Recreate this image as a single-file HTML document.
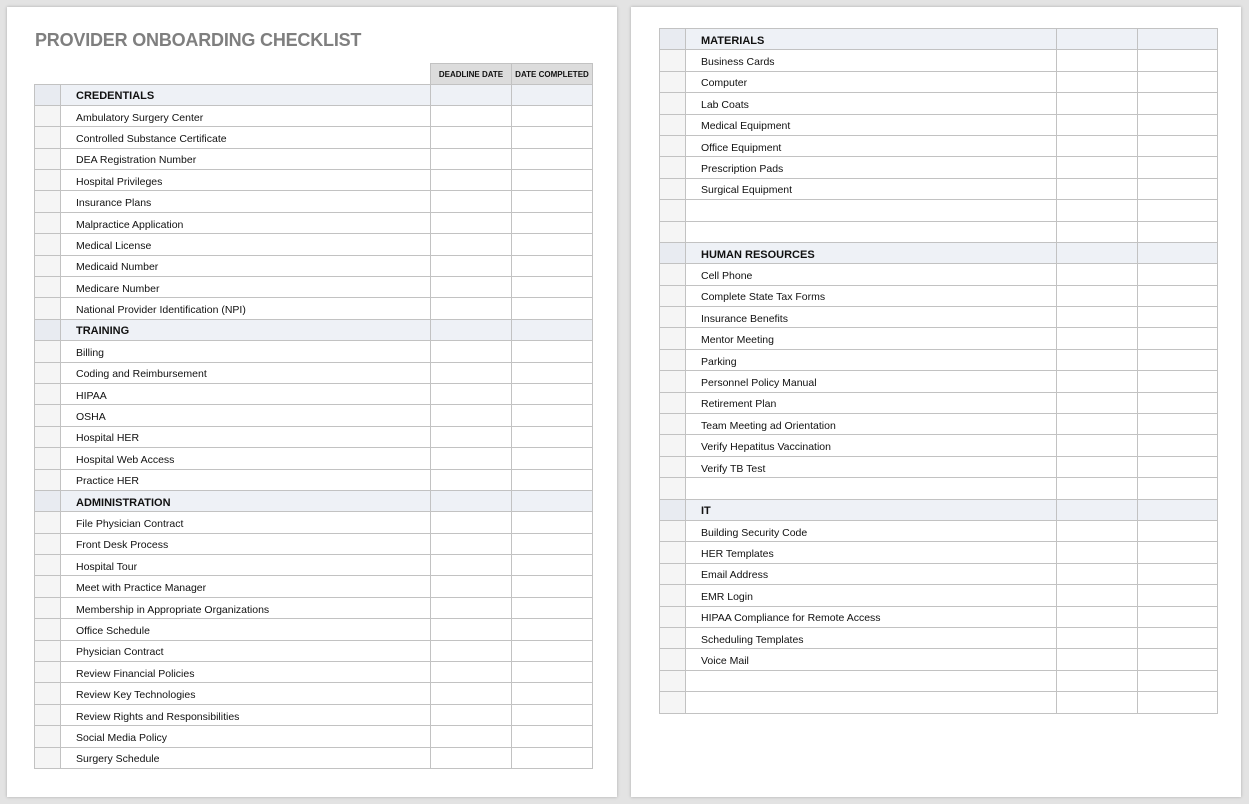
<!DOCTYPE html>
<html><head><meta charset="utf-8"><style>
body{margin:0;width:1249px;height:804px;background:#e3e3e3;position:relative;overflow:hidden;font-family:"Liberation Sans",sans-serif}
.page{position:absolute;background:#fff;box-shadow:0 0 3px rgba(0,0,0,.25)}
h1{position:absolute;left:35px;top:30px;margin:0;font-size:18px;color:#7f7f7f;font-weight:bold;letter-spacing:-0.2px}
table{position:absolute;border-collapse:collapse;table-layout:fixed;font-size:10.5px;color:#111}
td{border:1px solid #c2c2c2;height:21.4px;padding:3px 0 0 15px;white-space:nowrap;overflow:hidden;box-sizing:border-box}
td.a{background:#f5f5f5;padding:0}
td.e{padding:0}
tr.s td{background:#eef1f6;font-weight:bold;font-size:11px}
tr.s td.a{background:#e8ebf1}
tr.h td{background:#dcdcdc;font-weight:bold;font-size:8px;text-align:center;padding:2px 0 0 0;height:20.5px}
tr.h td.n{background:#fff;border:none}
</style></head><body>
<div class="page" style="left:7px;top:7px;width:610px;height:790px"></div>
<div class="page" style="left:631px;top:7px;width:610px;height:790px"></div>
<h1>PROVIDER ONBOARDING CHECKLIST</h1>
<table style="left:34px;top:63px;width:558px">
<colgroup><col style="width:26px"><col style="width:370px"><col style="width:81px"><col style="width:81px"></colgroup>
<tr class="h"><td class="n"></td><td class="n"></td><td>DEADLINE DATE</td><td>DATE COMPLETED</td></tr>
<tr class="s"><td class="a"></td><td>CREDENTIALS</td><td class="e"></td><td class="e"></td></tr>
<tr><td class="a"></td><td>Ambulatory Surgery Center</td><td class="e"></td><td class="e"></td></tr>
<tr><td class="a"></td><td>Controlled Substance Certificate</td><td class="e"></td><td class="e"></td></tr>
<tr><td class="a"></td><td>DEA Registration Number</td><td class="e"></td><td class="e"></td></tr>
<tr><td class="a"></td><td>Hospital Privileges</td><td class="e"></td><td class="e"></td></tr>
<tr><td class="a"></td><td>Insurance Plans</td><td class="e"></td><td class="e"></td></tr>
<tr><td class="a"></td><td>Malpractice Application</td><td class="e"></td><td class="e"></td></tr>
<tr><td class="a"></td><td>Medical License</td><td class="e"></td><td class="e"></td></tr>
<tr><td class="a"></td><td>Medicaid Number</td><td class="e"></td><td class="e"></td></tr>
<tr><td class="a"></td><td>Medicare Number</td><td class="e"></td><td class="e"></td></tr>
<tr><td class="a"></td><td>National Provider Identification (NPI)</td><td class="e"></td><td class="e"></td></tr>
<tr class="s"><td class="a"></td><td>TRAINING</td><td class="e"></td><td class="e"></td></tr>
<tr><td class="a"></td><td>Billing</td><td class="e"></td><td class="e"></td></tr>
<tr><td class="a"></td><td>Coding and Reimbursement</td><td class="e"></td><td class="e"></td></tr>
<tr><td class="a"></td><td>HIPAA</td><td class="e"></td><td class="e"></td></tr>
<tr><td class="a"></td><td>OSHA</td><td class="e"></td><td class="e"></td></tr>
<tr><td class="a"></td><td>Hospital HER</td><td class="e"></td><td class="e"></td></tr>
<tr><td class="a"></td><td>Hospital Web Access</td><td class="e"></td><td class="e"></td></tr>
<tr><td class="a"></td><td>Practice HER</td><td class="e"></td><td class="e"></td></tr>
<tr class="s"><td class="a"></td><td>ADMINISTRATION</td><td class="e"></td><td class="e"></td></tr>
<tr><td class="a"></td><td>File Physician Contract</td><td class="e"></td><td class="e"></td></tr>
<tr><td class="a"></td><td>Front Desk Process</td><td class="e"></td><td class="e"></td></tr>
<tr><td class="a"></td><td>Hospital Tour</td><td class="e"></td><td class="e"></td></tr>
<tr><td class="a"></td><td>Meet with Practice Manager</td><td class="e"></td><td class="e"></td></tr>
<tr><td class="a"></td><td>Membership in Appropriate Organizations</td><td class="e"></td><td class="e"></td></tr>
<tr><td class="a"></td><td>Office Schedule</td><td class="e"></td><td class="e"></td></tr>
<tr><td class="a"></td><td>Physician Contract</td><td class="e"></td><td class="e"></td></tr>
<tr><td class="a"></td><td>Review Financial Policies</td><td class="e"></td><td class="e"></td></tr>
<tr><td class="a"></td><td>Review Key Technologies</td><td class="e"></td><td class="e"></td></tr>
<tr><td class="a"></td><td>Review Rights and Responsibilities</td><td class="e"></td><td class="e"></td></tr>
<tr><td class="a"></td><td>Social Media Policy</td><td class="e"></td><td class="e"></td></tr>
<tr><td class="a"></td><td>Surgery Schedule</td><td class="e"></td><td class="e"></td></tr>
</table>
<table style="left:659px;top:28px;width:558px">
<colgroup><col style="width:26px"><col style="width:371px"><col style="width:81px"><col style="width:80px"></colgroup>
<tr class="s"><td class="a"></td><td>MATERIALS</td><td class="e"></td><td class="e"></td></tr>
<tr><td class="a"></td><td>Business Cards</td><td class="e"></td><td class="e"></td></tr>
<tr><td class="a"></td><td>Computer</td><td class="e"></td><td class="e"></td></tr>
<tr><td class="a"></td><td>Lab Coats</td><td class="e"></td><td class="e"></td></tr>
<tr><td class="a"></td><td>Medical Equipment</td><td class="e"></td><td class="e"></td></tr>
<tr><td class="a"></td><td>Office Equipment</td><td class="e"></td><td class="e"></td></tr>
<tr><td class="a"></td><td>Prescription Pads</td><td class="e"></td><td class="e"></td></tr>
<tr><td class="a"></td><td>Surgical Equipment</td><td class="e"></td><td class="e"></td></tr>
<tr><td class="a"></td><td></td><td class="e"></td><td class="e"></td></tr>
<tr><td class="a"></td><td></td><td class="e"></td><td class="e"></td></tr>
<tr class="s"><td class="a"></td><td>HUMAN RESOURCES</td><td class="e"></td><td class="e"></td></tr>
<tr><td class="a"></td><td>Cell Phone</td><td class="e"></td><td class="e"></td></tr>
<tr><td class="a"></td><td>Complete State Tax Forms</td><td class="e"></td><td class="e"></td></tr>
<tr><td class="a"></td><td>Insurance Benefits</td><td class="e"></td><td class="e"></td></tr>
<tr><td class="a"></td><td>Mentor Meeting</td><td class="e"></td><td class="e"></td></tr>
<tr><td class="a"></td><td>Parking</td><td class="e"></td><td class="e"></td></tr>
<tr><td class="a"></td><td>Personnel Policy Manual</td><td class="e"></td><td class="e"></td></tr>
<tr><td class="a"></td><td>Retirement Plan</td><td class="e"></td><td class="e"></td></tr>
<tr><td class="a"></td><td>Team Meeting ad Orientation</td><td class="e"></td><td class="e"></td></tr>
<tr><td class="a"></td><td>Verify Hepatitus Vaccination</td><td class="e"></td><td class="e"></td></tr>
<tr><td class="a"></td><td>Verify TB Test</td><td class="e"></td><td class="e"></td></tr>
<tr><td class="a"></td><td></td><td class="e"></td><td class="e"></td></tr>
<tr class="s"><td class="a"></td><td>IT</td><td class="e"></td><td class="e"></td></tr>
<tr><td class="a"></td><td>Building Security Code</td><td class="e"></td><td class="e"></td></tr>
<tr><td class="a"></td><td>HER Templates</td><td class="e"></td><td class="e"></td></tr>
<tr><td class="a"></td><td>Email Address</td><td class="e"></td><td class="e"></td></tr>
<tr><td class="a"></td><td>EMR Login</td><td class="e"></td><td class="e"></td></tr>
<tr><td class="a"></td><td>HIPAA Compliance for Remote Access</td><td class="e"></td><td class="e"></td></tr>
<tr><td class="a"></td><td>Scheduling Templates</td><td class="e"></td><td class="e"></td></tr>
<tr><td class="a"></td><td>Voice Mail</td><td class="e"></td><td class="e"></td></tr>
<tr><td class="a"></td><td></td><td class="e"></td><td class="e"></td></tr>
<tr><td class="a"></td><td></td><td class="e"></td><td class="e"></td></tr>
</table>
</body></html>
